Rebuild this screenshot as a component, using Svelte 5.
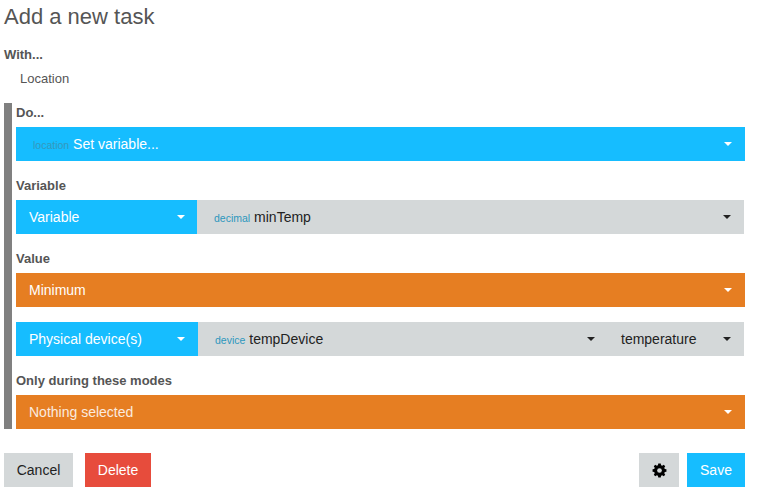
<script>
	const gear = 'M8 0.6 9.3 0.6 9.7 2.4 10.9 2.9 12.5 1.9 14.1 3.5 13.1 5.1 13.6 6.3 15.4 6.7 15.4 9.3 13.6 9.7 13.1 10.9 14.1 12.5 12.5 14.1 10.9 13.1 9.7 13.6 9.3 15.4 6.7 15.4 6.3 13.6 5.1 13.1 3.5 14.1 1.9 12.5 2.9 10.9 2.4 9.7 0.6 9.3 0.6 6.7 2.4 6.3 2.9 5.1 1.9 3.5 3.5 1.9 5.1 2.9 6.3 2.4 6.7 0.6Z';
</script>

<main class="page">
	<h1>Add a new task</h1>

	<div class="label with">With...</div>
	<div class="location">Location</div>

	<section class="rule">
		<div class="label do">Do...</div>
		<div class="drop blue">
			<span class="text indent"><small class="muted">location</small> Set variable...</span>
			<i class="caret"></i>
		</div>

		<div class="label sub">Variable</div>
		<div class="row">
			<div class="drop blue kind"><span class="text">Variable</span><i class="caret"></i></div>
			<div class="drop gray fill short">
				<span class="text indent"><small>decimal</small> minTemp</span>
				<i class="caret"></i>
			</div>
		</div>

		<div class="label sub">Value</div>
		<div class="drop orange"><span class="text">Minimum</span><i class="caret"></i></div>

		<div class="row second">
			<div class="drop blue kind wide"><span class="text">Physical device(s)</span><i class="caret"></i></div>
			<div class="gray fill short split">
				<div class="drop gray fill">
					<span class="text indent"><small>device</small> tempDevice</span>
					<i class="caret"></i>
				</div>
				<div class="drop gray prop"><span class="text">temperature</span><i class="caret"></i></div>
			</div>
		</div>

		<div class="label modes">Only during these modes</div>
		<div class="drop orange"><span class="text dim">Nothing selected</span><i class="caret"></i></div>
	</section>

	<footer>
		<button class="btn gray cancel">Cancel</button>
		<button class="btn red delete">Delete</button>
		<span class="spacer"></span>
		<button class="btn gray cog" aria-label="Settings">
			<svg viewBox="0 0 16 16" width="15" height="15">
				<path d={gear} fill="#000" />
				<circle cx="8" cy="8" r="2.5" fill="#d4d8d9" />
			</svg>
		</button>
		<button class="btn blue save">Save</button>
	</footer>
</main>

<style>
	:global(body) {
		background: #fff;
	}
	.page {
		width: 741px;
		padding-left: 4px;
		font-family: 'Liberation Sans', Arial, sans-serif;
		font-size: 14px;
		color: #555;
	}
	h1 {
		margin: 0;
		padding-top: 4px;
		height: 28px;
		font-size: 22px;
		line-height: 26px;
		font-weight: 400;
		color: #555;
	}
	.label {
		font-size: 13px;
		line-height: 16px;
		font-weight: 700;
	}
	.with {
		margin-top: 15px;
	}
	.location {
		margin-top: 8px;
		padding-left: 16px;
		font-size: 13px;
		line-height: 16px;
	}
	.rule {
		margin-top: 16px;
		padding-left: 4px;
		border-left: 8px solid #808080;
	}
	.do {
		height: 24px;
		line-height: 19px;
	}
	.sub,
	.modes {
		height: 39px;
		padding-top: 16px;
		line-height: 17px;
		box-sizing: border-box;
	}
	.row {
		display: flex;
	}
	.second {
		margin-top: 15px;
	}
	.drop {
		display: flex;
		align-items: center;
		justify-content: space-between;
		height: 34px;
		padding: 0 13px;
		box-sizing: border-box;
		font-size: 14px;
	}
	.text {
		white-space: nowrap;
	}
	.indent {
		padding-left: 4px;
	}
	.blue {
		background: #16bdff;
		color: #fff;
	}
	.orange {
		background: #e67e22;
		color: #fff;
	}
	.gray {
		background: #d4d8d9;
		color: #222;
	}
	.red {
		background: #e74c3c;
		color: #fff;
	}
	.kind {
		width: 181px;
		padding-right: 12px;
	}
	.wide {
		width: 182px;
		padding-right: 13px;
	}
	.fill {
		flex: 1;
	}
	.short {
		margin-right: 1px;
	}
	.split {
		display: flex;
	}
	.prop {
		width: 136px;
	}
	small {
		font-size: 10.5px;
		color: #2c97bd;
	}
	.muted {
		color: #3498bb;
	}
	.dim {
		opacity: 0.85;
	}
	.caret {
		width: 0;
		height: 0;
		border-left: 4px solid transparent;
		border-right: 4px solid transparent;
		border-top: 4px solid currentColor;
	}
	footer {
		display: flex;
		margin-top: 24px;
	}
	.spacer {
		flex: 1;
	}
	.btn {
		height: 34px;
		padding: 0;
		border: 0;
		font-family: inherit;
		font-size: 14px;
	}
	.cancel {
		width: 69px;
	}
	.delete {
		width: 66px;
		margin-left: 12px;
	}
	.cog {
		display: flex;
		align-items: center;
		justify-content: center;
		width: 40px;
		margin-right: 8px;
	}
	.save {
		width: 58px;
	}
</style>
